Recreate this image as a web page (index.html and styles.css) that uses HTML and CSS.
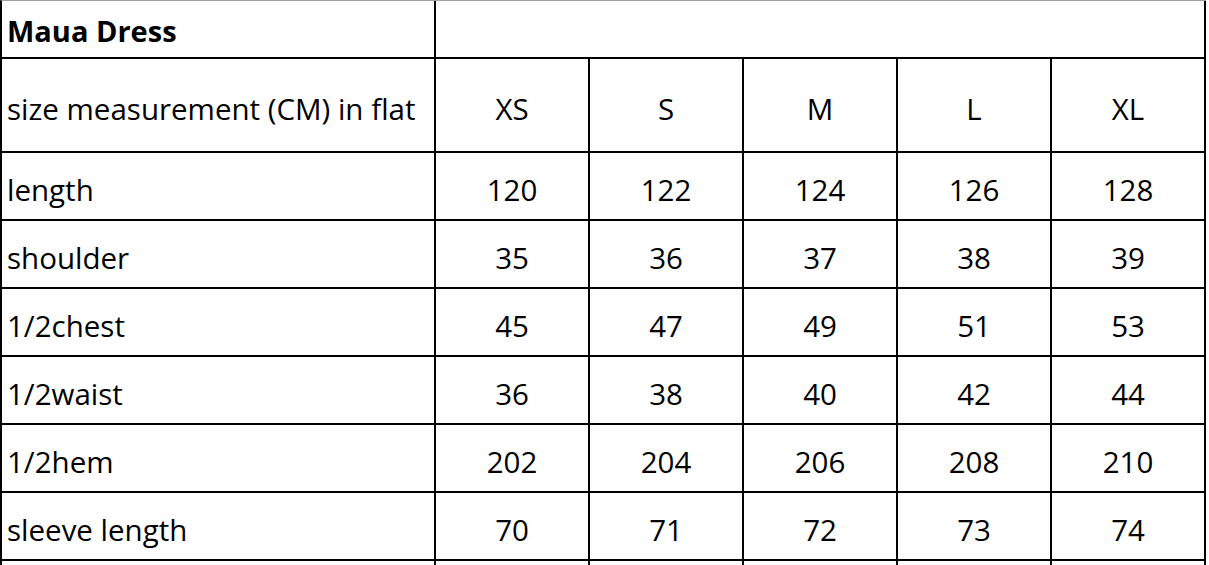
FILE: index.html
```html
<!DOCTYPE html>
<html lang="en">
<head>
<meta charset="utf-8">
<title>Maua Dress size chart</title>
<link rel="stylesheet" href="styles.css">
</head>
<body>
<div class="sheet">
  <div class="cell label title">Maua Dress</div>
  <div class="cell wide"></div>

  <div class="cell label">size measurement (CM) in flat</div>
  <div class="cell num">XS</div>
  <div class="cell num">S</div>
  <div class="cell num">M</div>
  <div class="cell num">L</div>
  <div class="cell num">XL</div>

  <div class="cell label">length</div>
  <div class="cell num">120</div>
  <div class="cell num">122</div>
  <div class="cell num">124</div>
  <div class="cell num">126</div>
  <div class="cell num">128</div>

  <div class="cell label">shoulder</div>
  <div class="cell num">35</div>
  <div class="cell num">36</div>
  <div class="cell num">37</div>
  <div class="cell num">38</div>
  <div class="cell num">39</div>

  <div class="cell label">1/2chest</div>
  <div class="cell num">45</div>
  <div class="cell num">47</div>
  <div class="cell num">49</div>
  <div class="cell num">51</div>
  <div class="cell num">53</div>

  <div class="cell label">1/2waist</div>
  <div class="cell num">36</div>
  <div class="cell num">38</div>
  <div class="cell num">40</div>
  <div class="cell num">42</div>
  <div class="cell num">44</div>

  <div class="cell label">1/2hem</div>
  <div class="cell num">202</div>
  <div class="cell num">204</div>
  <div class="cell num">206</div>
  <div class="cell num">208</div>
  <div class="cell num">210</div>

  <div class="cell label">sleeve length</div>
  <div class="cell num">70</div>
  <div class="cell num">71</div>
  <div class="cell num">72</div>
  <div class="cell num">73</div>
  <div class="cell num">74</div>

  <div class="cell label"></div>
  <div class="cell num"></div>
  <div class="cell num"></div>
  <div class="cell num"></div>
  <div class="cell num"></div>
  <div class="cell num"></div>
</div>
</body>
</html>
```

FILE: styles.css
```css
html, body {
  margin: 0;
  padding: 0;
  background: #ffffff;
  overflow: hidden;
}

.sheet {
  display: grid;
  grid-template-columns: 434px repeat(5, 154px);
  grid-template-rows: 58px 94px repeat(7, 68px);
  width: max-content;
  border-top: 1px solid #a0a0a0;
  border-left: 2px solid #000;
  font-family: "Open Sans", "Liberation Sans", Arial, sans-serif;
  font-size: 29.5px;
  color: #000;
}

.cell {
  box-sizing: border-box;
  border-right: 2px solid #000;
  border-bottom: 2px solid #000;
  display: flex;
  align-items: center;
  padding-top: 7px;
  line-height: 1;
  white-space: nowrap;
}

.label {
  padding-left: 5px;
}

.title {
  font-weight: bold;
  font-size: 29px;
  padding-top: 3px;
}

.wide {
  grid-column: span 5;
}

.num {
  justify-content: center;
}
```
